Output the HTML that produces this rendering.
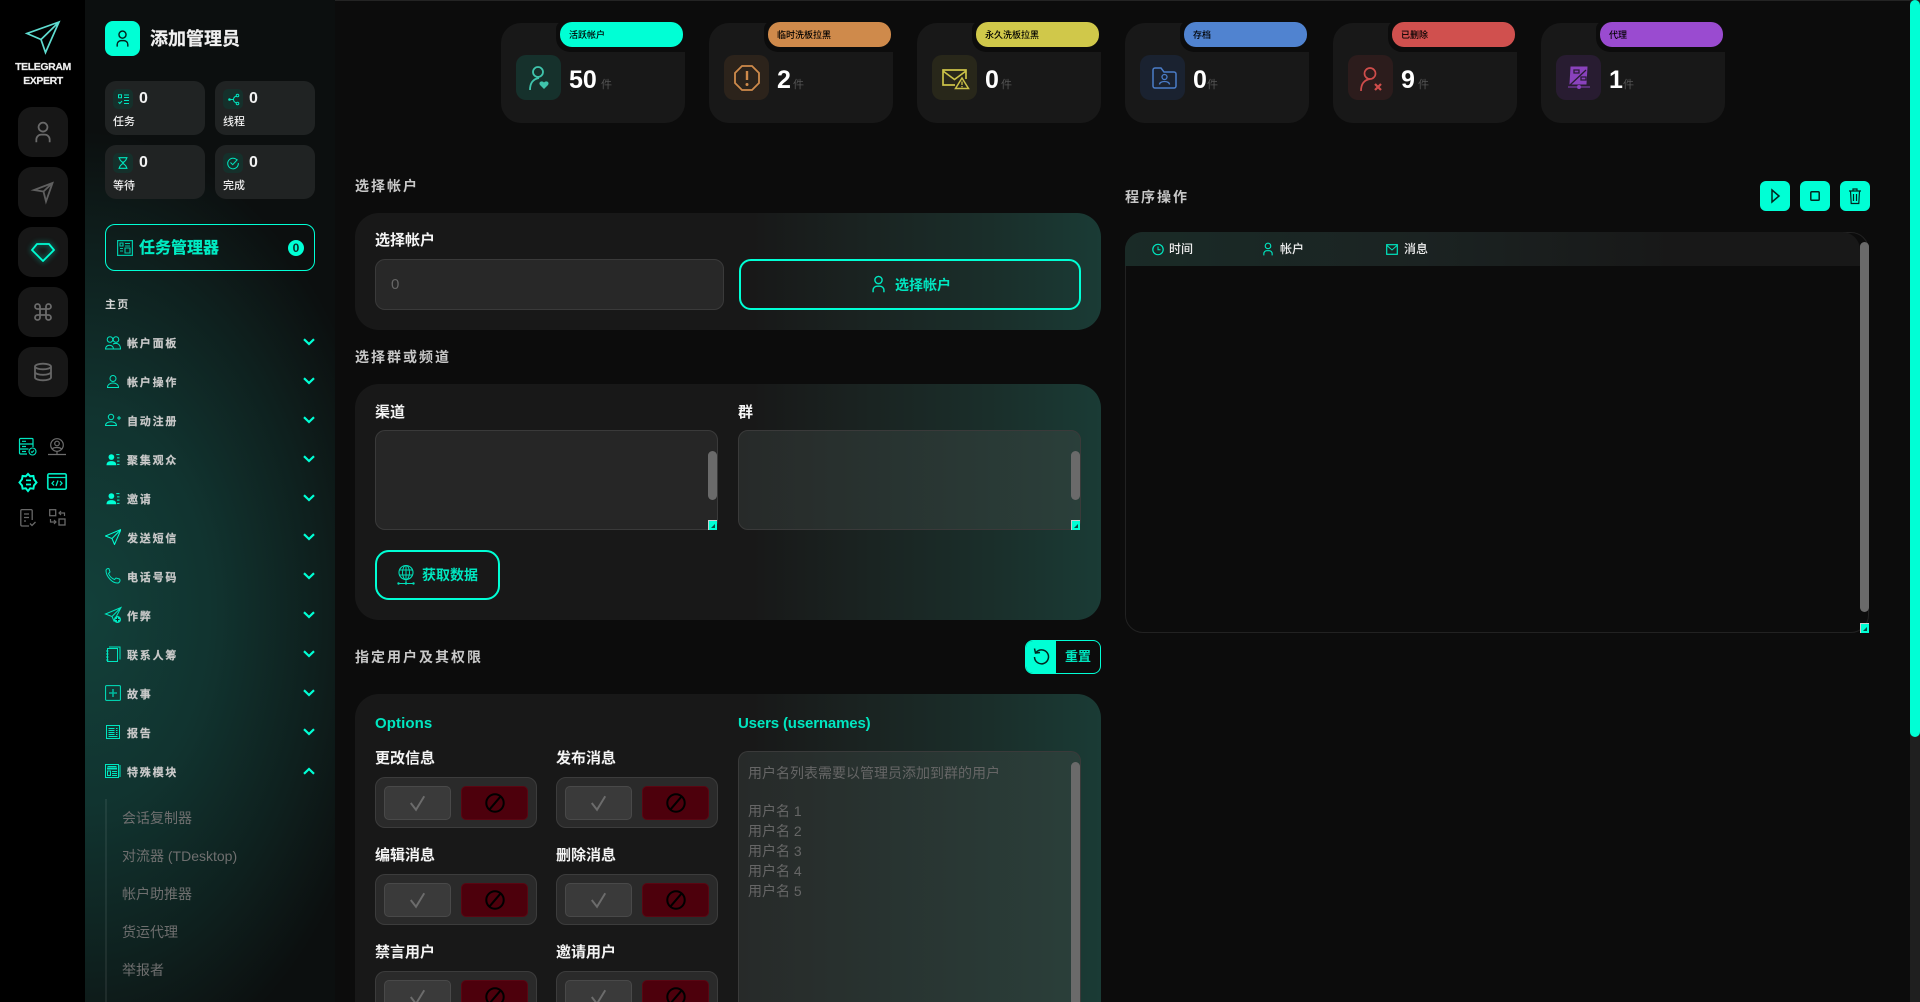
<!DOCTYPE html>
<html lang="zh"><head><meta charset="utf-8"><title>Telegram Expert</title>
<style>
*{box-sizing:border-box}
html,body{margin:0;padding:0;width:1920px;height:1002px;overflow:hidden;background:#0c0c0c}
body{position:relative;font-family:"Liberation Sans","Noto Sans CJK SC",sans-serif;color:#fff}
.a{position:absolute}
.t{position:absolute;white-space:nowrap;line-height:1.2}
svg{position:absolute;overflow:visible;fill:none}
.rail{position:absolute;left:0;top:0;width:85px;height:1002px;background:#000}
.side{position:absolute;left:85px;top:0;width:250px;height:1002px;background:radial-gradient(ellipse 310px 480px at 0% 61%,#12403a 0%,#11332f 42%,#0e1f1d 76%,#0c0f0f 100%)}
.rb{position:absolute;left:18px;width:50px;height:50px;border-radius:14px;background:#171717}
.sb{position:absolute;width:100px;height:54px;border-radius:11px;background:#202323}
.sb i{position:absolute;left:8px;top:8px;width:20px;height:20px;border-radius:5px;background:#15302b}
.sb b{position:absolute;left:34px;top:9px;font-size:16px;line-height:18px;color:#f2f2f2}
.sb span{position:absolute;left:8px;top:34px;font-size:11px;line-height:14px;color:#eee;font-weight:500}
.m{position:absolute;left:127px;font-size:11px;font-weight:700;letter-spacing:1.8px;line-height:14px;color:#c9c9c9;white-space:nowrap;-webkit-text-stroke:.2px #c9c9c9}
.sub{position:absolute;left:122px;font-size:14px;line-height:18px;color:#6f6f6f;white-space:nowrap}
.card{position:absolute;top:23px;width:184px;height:100px;border-radius:20px;background:#181818}
.notch{position:absolute;left:55px;top:-2px;width:131px;height:31px;background:#0c0c0c;border-bottom-left-radius:14px;border-top-left-radius:8px}
.pill{position:absolute;left:59px;top:-1px;width:123px;height:25px;border-radius:12px;color:#000;font-size:9px;line-height:27px;padding-left:9px;font-weight:500}
.ib{position:absolute;left:15px;top:32px;width:45px;height:45px;border-radius:10px}
.num{position:absolute;left:68px;top:42px;font-size:25px;line-height:30px;font-weight:700;color:#fff}
.jian{position:absolute;top:56px;font-size:11px;line-height:13px;color:#555}
.h{position:absolute;left:355px;font-size:14px;font-weight:700;letter-spacing:2px;line-height:16px;color:#c8c8c8;white-space:nowrap}
.panel{position:absolute;left:355px;width:746px;border-radius:24px;background:linear-gradient(90deg,#181818 0,#181818 53%,#1a2321 68%,#1a2e2a 85%,#1a3b35 100%)}
.lb{position:absolute;font-size:15px;line-height:18px;font-weight:700;color:#f4f4f4;white-space:nowrap}
.ta{position:absolute;border:1px solid #3a3a3a;border-radius:10px}
.thumb{position:absolute;width:9px;border-radius:5px;background:#6a6a6a}
.rz{position:absolute;width:9px;height:10px;background:#00ffd5;border-top:1px solid #ccc;border-left:1px solid #ccc}
.rz:after{content:"";position:absolute;left:2px;top:3px;width:0;height:0;border-left:4px solid transparent;border-bottom:4px solid #0a4a40}
.tg{position:absolute;width:162px;height:51px;border-radius:10px;background:#2a2a2a;border:1px solid #3c3c3c}
.tg u{position:absolute;left:8px;top:8px;width:67px;height:34px;border-radius:5px;background:#3a3a3a;border:1px solid #494949}
.tg s{position:absolute;left:85px;top:8px;width:67px;height:34px;border-radius:5px;background:#4d000c;border:1px solid #5a0612}
.ph{position:absolute;left:748px;font-size:14px;line-height:20px;color:#666;white-space:nowrap}
.ab{position:absolute;top:181px;width:30px;height:30px;border-radius:6px;background:#00ffd5}
</style></head><body>
<svg width="0" height="0" style="position:absolute"><defs>
<symbol id="usr" viewBox="0 0 18 24"><circle cx="9" cy="6.500" r="5" stroke="currentColor" stroke-width="2"/><path d="M1.500 23.500v-3a5.500 5.500 0 0 1 5.500-5.500h4a5.500 5.500 0 0 1 5.500 5.500v3" stroke="currentColor" stroke-width="2"/></symbol>
<symbol id="chk" viewBox="0 0 24 24"><path d="M3 12l7 9L21 3" stroke="#6c6c6c" stroke-width="2.600"/></symbol>
<symbol id="ban" viewBox="0 0 24 24"><circle cx="12" cy="12" r="9.500" stroke="#000" stroke-width="2.200"/><path d="M6 19L18 5" stroke="#000" stroke-width="2.200"/></symbol>
<symbol id="dn" viewBox="0 0 12 8"><path d="M1 1.200l5 4.800 5-4.800" stroke="#00ffd5" stroke-width="2.200"/></symbol>
<symbol id="lst" viewBox="0 0 16 16"><circle cx="6" cy="5" r="3.500" fill="#00ffd5"/><path d="M0 15c0-3.500 2-5 6-5s6 1.500 6 5z" fill="#00ffd5"/><path d="M12 2h4M13 6h3M13 10h3M13 14h3" stroke="#00ffd5" stroke-width="1.300"/></symbol>
<symbol id="pln" viewBox="0 0 16 16"><path d="M16 .5L.5 7l6.500 2.500L9.500 15.500zM16 .5L7 9.500" stroke="#00ffd5" stroke-width="1"/></symbol>
</defs></svg>

<div class="a" style="left:0;top:0;width:1920px;height:1px;background:#242424"></div>
<div class="rail"></div>
<div class="side"></div>

<!-- logo -->
<svg style="left:26px;top:21px" width="34" height="33" viewBox="0 0 34 33"><path d="M33 1L1 12.500l14 6L19.500 31.500zM33 1L15 18.500" stroke="#5fdcd0" stroke-width="1.700"/></svg>
<div class="t" style="left:10px;width:66px;text-align:center;top:60px;font-size:10.500px;font-weight:700;line-height:14px;color:#eee;letter-spacing:-.4px;-webkit-text-stroke:.2px #eee">TELEGRAM<br>EXPERT</div>

<div class="rb" style="top:107px"></div><div class="rb" style="top:167px"></div><div class="rb" style="top:227px"></div><div class="rb" style="top:287px"></div><div class="rb" style="top:347px"></div>
<svg style="left:35px;top:121px;color:#6a6a6a" width="16" height="22"><use href="#usr" width="16" height="22"/></svg>
<svg style="left:33px;top:182px" width="20" height="20" viewBox="0 0 20 20"><path d="M19.500 1L1 8l9.500 1.500L13 19.500zM19.500 1L10.500 9.500" stroke="#5f5f5f" stroke-width="1.800"/></svg>
<svg style="left:31px;top:243px;filter:drop-shadow(0 0 3px #00b89c)" width="24" height="19" viewBox="0 0 24 19"><path d="M6 1h12l5 6-11 11L1 7z" stroke="#00ffd5" stroke-width="1.800" stroke-linejoin="round"/></svg>
<svg style="left:34px;top:303px" width="18" height="18" viewBox="0 0 18 18"><path d="M6 6V3.500A2.500 2.500 0 1 0 3.500 6H14.500A2.500 2.500 0 1 0 12 3.500v11A2.500 2.500 0 1 0 14.500 12H3.500A2.500 2.500 0 1 0 6 14.500z" stroke="#6a6a6a" stroke-width="1.800"/></svg>
<svg style="left:34px;top:363px" width="18" height="18" viewBox="0 0 18 18"><ellipse cx="9" cy="3.500" rx="8" ry="2.800" stroke="#666" stroke-width="1.800"/><path d="M1 3.500v11c0 1.600 3.600 2.800 8 2.800s8-1.200 8-2.800v-11M1 9c0 1.600 3.600 2.800 8 2.800s8-1.200 8-2.800" stroke="#666" stroke-width="1.800"/></svg>

<!-- small rail icons -->
<svg style="left:19px;top:438px" width="18" height="18" viewBox="0 0 18 18"><path d="M8 16H1.500a1 1 0 0 1-1-1V1.500a1 1 0 0 1 1-1h11.500a1 1 0 0 1 1 1V9M.5 6h13.500M.5 11h9M3 3.300h4M3 8.500h4M3 13.500h4" stroke="#00e6c0" stroke-width="1.200"/><circle cx="13.500" cy="13.500" r="3.500" stroke="#00e6c0" stroke-width="1.100"/><path d="M12 13.500l1 1 2-2" stroke="#00e6c0"/></svg>
<svg style="left:48px;top:438px" width="18" height="18" viewBox="0 0 18 18"><circle cx="9" cy="7" r="6.300" stroke="#6e6e6e" stroke-width="1.200"/><circle cx="9" cy="5.500" r="2.300" stroke="#6e6e6e" stroke-width="1.200"/><path d="M4.500 11c.8-2 7.500-2 9 0M9 13.500V16M0 16.500h18" stroke="#6e6e6e" stroke-width="1.200"/></svg>
<svg style="left:19px;top:473px" width="18" height="19" viewBox="0 0 18 19"><path d="M9 1l2.200 2.300 3.200-.3.600 3.200L17.500 9.500 15 12.500l-.6 3.200-3.200-.4L9 18l-2.200-2.700-3.200.4L3 12.500.5 9.500 3 6.200l.6-3.200 3.200.3z" stroke="#00ffd5" stroke-width="2"/><path d="M7 7.300h5M7 11.500h5" stroke="#00ffd5" stroke-width="1.700"/></svg>
<svg style="left:47px;top:473px" width="20" height="17" viewBox="0 0 20 17"><rect x=".8" y=".8" width="18.400" height="15.400" rx="1.500" stroke="#00e6c0" stroke-width="1.700"/><path d="M1 4.500h18M7 8l-2 2.200L7 12.500M13 8l2 2.200-2 2.300M11 7.500l-2 5.500" stroke="#00e6c0" stroke-width="1.300"/></svg>
<svg style="left:20px;top:509px" width="16" height="18" viewBox="0 0 16 18"><path d="M9 17H2a1.200 1.200 0 0 1-1.200-1.200V1.700A1.200 1.200 0 0 1 2 .6h9a1.200 1.200 0 0 1 1.200 1.200V11M4 5h5M4 8.500h5M4 12h2M10 14.500l2 2 3.500-3.500" stroke="#686868" stroke-width="1.300"/></svg>
<svg style="left:49px;top:509px" width="17" height="17" viewBox="0 0 17 17"><rect x=".7" y=".7" width="6" height="6" stroke="#686868" stroke-width="1.300"/><rect x="10" y="10" width="6" height="6" stroke="#686868" stroke-width="1.300"/><path d="M10 4h5.500v3M12 2L10 4l2 2M7 13H1.500v-3M5 11l2 2-2 2" stroke="#686868" stroke-width="1.200"/></svg>

<!-- heading -->
<div class="a" style="left:105px;top:21px;width:35px;height:35px;border-radius:8px;background:#00ffd5"></div>
<svg style="left:115px;top:30px;color:#03201a" width="15" height="17"><use href="#usr" width="15" height="17"/></svg>
<div class="t" style="left:150px;top:28px;font-size:18px;font-weight:700;color:#f0f0f0;line-height:22px;-webkit-text-stroke:.2px #f0f0f0">添加管理员</div>

<!-- stat boxes -->
<div class="sb" style="left:105px;top:81px"><i></i><b>0</b><span>任务</span></div>
<div class="sb" style="left:215px;top:81px"><i></i><b>0</b><span>线程</span></div>
<div class="sb" style="left:105px;top:145px"><i></i><b>0</b><span>等待</span></div>
<div class="sb" style="left:215px;top:145px"><i></i><b>0</b><span>完成</span></div>
<svg style="left:118px;top:94px" width="11" height="11" viewBox="0 0 11 11"><path d="M.5.700h3v3h-3zM6 1h5M6 3.500h5M6 6.500h5M6 9.500h5M.5 8l1.300 1.500L4 7" stroke="#00e6c0" stroke-width="1"/></svg>
<svg style="left:228px;top:94px" width="11" height="11" viewBox="0 0 11 11"><circle cx="1.500" cy="5.500" r="1.300" fill="#00e6c0"/><circle cx="9.500" cy="1.500" r="1.300" stroke="#00e6c0"/><circle cx="9.500" cy="9.500" r="1.300" stroke="#00e6c0"/><path d="M2 5.500h3.500M8.500 2Q5.500 3 5.500 5.500T8.500 9" stroke="#00e6c0"/></svg>
<svg style="left:118px;top:157px" width="10" height="12" viewBox="0 0 10 12"><path d="M.5.700h9M.5 11.300h9M1.500 1c0 3 3 3.500 3.500 5 .5-1.500 3.500-2 3.500-5M1.500 11c0-3 3-3.500 3.500-5 .5 1.500 3.500 2 3.500 5" stroke="#00e6c0" stroke-width="1.100"/></svg>
<svg style="left:227px;top:157px" width="12" height="12" viewBox="0 0 12 12"><path d="M10 3A5.300 5.300 0 1 0 11.300 6" stroke="#00e6c0"/><path d="M3.500 5.500l2.200 2.200L10.500 2.500" stroke="#00e6c0"/></svg>

<!-- task manager -->
<div class="a" style="left:105px;top:224px;width:210px;height:47px;border:1.500px solid #00ffd5;border-radius:10px"></div>
<svg style="left:117px;top:240px" width="16" height="16" viewBox="0 0 16 16"><rect x=".6" y=".6" width="14.800" height="14.800" stroke="#00c8a8" stroke-width="1.200"/><path d="M3 3h3v3H3zM8 3.500h5M8 6h5M3 8.500h3M3 11h3M8 8h5v5H8z" stroke="#00c8a8" stroke-width="1.100"/></svg>
<div class="t" style="left:139px;top:239px;font-size:16px;font-weight:700;color:#00ecc4;line-height:20px;-webkit-text-stroke:.2px #00ecc4">任务管理器</div>
<div class="a" style="left:288px;top:240px;width:16px;height:16px;border-radius:50%;background:#00ffd5;color:#0b2a25;font-size:12px;font-weight:700;line-height:16px;text-align:center">0</div>

<div class="t" style="left:105px;top:298px;font-size:11px;font-weight:700;letter-spacing:1.300px;color:#d6d6d6;line-height:14px">主页</div>

<!-- menu -->
<div class="m" style="top:337px">帐户面板</div><div class="m" style="top:376px">帐户操作</div><div class="m" style="top:415px">自动注册</div><div class="m" style="top:454px">聚集观众</div><div class="m" style="top:493px">邀请</div><div class="m" style="top:532px">发送短信</div><div class="m" style="top:571px">电话号码</div><div class="m" style="top:610px">作弊</div><div class="m" style="top:649px">联系人筹</div><div class="m" style="top:688px">故事</div><div class="m" style="top:727px">报告</div><div class="m" style="top:766px">特殊模块</div>
<svg style="left:303px;top:338px" width="12" height="8"><use href="#dn"/></svg><svg style="left:303px;top:377px" width="12" height="8"><use href="#dn"/></svg><svg style="left:303px;top:416px" width="12" height="8"><use href="#dn"/></svg><svg style="left:303px;top:455px" width="12" height="8"><use href="#dn"/></svg><svg style="left:303px;top:494px" width="12" height="8"><use href="#dn"/></svg><svg style="left:303px;top:533px" width="12" height="8"><use href="#dn"/></svg><svg style="left:303px;top:572px" width="12" height="8"><use href="#dn"/></svg><svg style="left:303px;top:611px" width="12" height="8"><use href="#dn"/></svg><svg style="left:303px;top:650px" width="12" height="8"><use href="#dn"/></svg><svg style="left:303px;top:689px" width="12" height="8"><use href="#dn"/></svg><svg style="left:303px;top:728px" width="12" height="8"><use href="#dn"/></svg>
<svg style="left:303px;top:767px" width="12" height="8" viewBox="0 0 12 8"><path d="M1 6.800l5-4.800 5 4.800" stroke="#00ffd5" stroke-width="2.200"/></svg>

<svg style="left:105px;top:336px" width="16" height="14" viewBox="0 0 16 14"><circle cx="5" cy="3.500" r="2.800" stroke="#00e6c0"/><circle cx="11" cy="3.500" r="2.800" stroke="#00e6c0"/><path d="M.5 13c0-5 8-5 8 0zM8 8c4-1.500 7.500 0 7.500 5H9" stroke="#00e6c0"/></svg>
<svg style="left:107px;top:375px" width="12" height="13" viewBox="0 0 12 13"><circle cx="6" cy="3.500" r="3" stroke="#00e6c0"/><path d="M.5 12.500c0-6 11-6 11 0z" stroke="#00e6c0"/></svg>
<svg style="left:105px;top:414px" width="16" height="12" viewBox="0 0 16 12"><circle cx="6" cy="3" r="2.700" stroke="#00e6c0"/><path d="M.5 11.500c0-5 11-5 11 0zM12 4h4M14 2v4" stroke="#00e6c0"/></svg>
<svg style="left:105px;top:453px" width="16" height="13"><use href="#lst" width="16" height="13"/></svg>
<svg style="left:105px;top:492px" width="16" height="13"><use href="#lst" width="16" height="13"/></svg>
<svg style="left:105px;top:529px" width="16" height="16"><use href="#pln"/></svg>
<svg style="left:105px;top:568px" width="16" height="16" viewBox="0 0 16 16"><path d="M1 2.500C1 1 3 0 4 .8l1 3.200-1.500 1.500c1 2.500 3.500 5 6 6L11 10l3.500 1c1 1 .5 3.500-1.500 4C7 15.500 1 8 1 2.500z" stroke="#00e6c0"/></svg>
<svg style="left:105px;top:607px" width="16" height="16" viewBox="0 0 16 16"><path d="M16 .5L.5 7l6.500 2.500 2 4.500zM16 .5L7 9.500" stroke="#00e6c0"/><circle cx="12.500" cy="12.500" r="3.500" fill="#00e6c0"/><path d="M12.500 10.500v4M10.500 12.500h4" stroke="#0d2a26"/></svg>
<svg style="left:105px;top:646px" width="16" height="16" viewBox="0 0 16 16"><path d="M2.500 2.500h10v13h-10zM4 1h11v12.500M1 5h2.500M1 8h2.500M1 11h2.500M1 14h2.500" stroke="#00e6c0"/></svg>
<svg style="left:105px;top:685px" width="16" height="16" viewBox="0 0 16 16"><rect x=".6" y=".6" width="14.800" height="14.800" rx="1" stroke="#00e6c0" stroke-width="1"/><path d="M8 4v8M4 8h8" stroke="#00b89c" stroke-width="1.600"/></svg>
<svg style="left:106px;top:725px" width="14" height="14" viewBox="0 0 14 14"><rect x=".5" y=".5" width="13" height="13" stroke="#00e6c0"/><path d="M2.500 3.500h6M2.500 5.500h6M2.500 7.500h6M2.500 9.500h6M2.500 11.500h9M10 3.500h1.500M10 5.500h1.500M10 7.500h1.500M10 9.500h1.500" stroke="#00e6c0"/></svg>
<svg style="left:105px;top:764px" width="16" height="14" viewBox="0 0 16 14"><path d="M.5.500h13v13H.5zM2.500 2.500h9M15 1v12" stroke="#00e6c0"/><path d="M2 4.500h10" stroke="#00e6c0" stroke-width="2"/><path d="M2.500 7h3v4.500h-3zM7 7.500h5M7 9.500h5M7 11.500h5" stroke="#00e6c0"/></svg>

<div class="a" style="left:105px;top:799px;width:2px;height:203px;background:rgba(255,255,255,.07)"></div>
<div class="sub" style="top:809px">会话复制器</div><div class="sub" style="top:847px">对流器 (TDesktop)</div><div class="sub" style="top:885px">帐户助推器</div><div class="sub" style="top:923px">货运代理</div><div class="sub" style="top:961px">举报者</div>

<!-- stat cards -->
<div class="card" style="left:501px"><div class="notch"></div><div class="pill" style="background:#00ffd5">活跃帐户</div><div class="ib" style="background:#16312c"></div><div class="num">50</div><div class="jian" style="left:100px">件</div>
<svg style="left:28px;top:43px" width="21" height="24" viewBox="0 0 21 24"><circle cx="9" cy="6" r="5" stroke="#3fc4ac" stroke-width="1.800"/><path d="M1 24c0-7 3-11 9-12" stroke="#3fc4ac" stroke-width="1.800"/><path d="M15 23l-4-4c-2-3 2-5 4-2.500 2-2.500 6-.5 4 2.500z" fill="#3fc4ac"/></svg></div>
<div class="card" style="left:709px"><div class="notch"></div><div class="pill" style="background:#cf8a4b">临时洗板拉黑</div><div class="ib" style="background:#2c231b"></div><div class="num">2</div><div class="jian" style="left:84px">件</div>
<svg style="left:25px;top:42px" width="26" height="26" viewBox="0 0 26 26"><path d="M8 1h10l7 7v10l-7 7H8l-7-7V8z" stroke="#cf8a4b" stroke-width="1.800"/><path d="M13 6v9" stroke="#cf8a4b" stroke-width="2.400"/><circle cx="13" cy="19.500" r="1.500" fill="#cf8a4b"/></svg></div>
<div class="card" style="left:917px"><div class="notch"></div><div class="pill" style="background:#d0c84a">永久洗板拉黑</div><div class="ib" style="background:#28271a"></div><div class="num">0</div><div class="jian" style="left:84px">件</div>
<svg style="left:25px;top:46px" width="27" height="20" viewBox="0 0 27 20"><path d="M13 16H1V1h23v9M1 2l11.500 8.500L24 2" stroke="#cbc248" stroke-width="1.700"/><path d="M20 9l6.500 10.500H13.500z" stroke="#cbc248" stroke-width="1.500" fill="#28271a"/><path d="M20 12.500v3.500M20 17v1.200" stroke="#cbc248" stroke-width="1.300"/></svg></div>
<div class="card" style="left:1125px"><div class="notch"></div><div class="pill" style="background:#5083d0">存档</div><div class="ib" style="background:#1a2230"></div><div class="num">0</div><div class="jian" style="left:82px">件</div>
<svg style="left:27px;top:44px" width="25" height="22" viewBox="0 0 25 22"><path d="M1 3a2 2 0 0 1 2-2h6l3 4h10a2 2 0 0 1 2 2v12a2 2 0 0 1-2 2H3a2 2 0 0 1-2-2z" stroke="#4a7cc7" stroke-width="1.500"/><circle cx="12.500" cy="10" r="2.500" stroke="#4a7cc7" stroke-width="1.300"/><path d="M7.500 17.500c0-4 10-4 10 0" stroke="#4a7cc7" stroke-width="1.300"/></svg></div>
<div class="card" style="left:1333px"><div class="notch"></div><div class="pill" style="background:#d0504e">已删除</div><div class="ib" style="background:#2c1c1c"></div><div class="num">9</div><div class="jian" style="left:85px">件</div>
<svg style="left:27px;top:44px" width="24" height="24" viewBox="0 0 24 24"><circle cx="10" cy="6.500" r="5.500" stroke="#cf4d4b" stroke-width="1.700"/><path d="M1 24c0-7 3-11 9-12" stroke="#cf4d4b" stroke-width="1.700"/><path d="M15 17l6 6M21 17l-6 6" stroke="#cf4d4b" stroke-width="2.200"/></svg></div>
<div class="card" style="left:1541px"><div class="notch"></div><div class="pill" style="background:#9a4bd0">代理</div><div class="ib" style="background:#281c31"></div><div class="num">1</div><div class="jian" style="left:82px">件</div>
<svg style="left:26px;top:43px" width="24" height="24" viewBox="0 0 24 24"><path d="M4 1h16l-1 17H3z" fill="#8a42bd" stroke="#8a42bd"/><path d="M7 4h5v3H7zM14 11h5v3h-5z" stroke="#2a1c35" stroke-width="1.300"/><path d="M3 19L19 4" stroke="#281c31" stroke-width="1.300"/><circle cx="12" cy="21" r="2" fill="#8a42bd"/><path d="M1 21h22" stroke="#8a42bd"/></svg></div>

<!-- sections -->
<div class="h" style="top:178px">选择帐户</div>
<div class="panel" style="top:213px;height:117px"></div>
<div class="lb" style="left:375px;top:232px">选择帐户</div>
<div class="ta" style="left:375px;top:259px;width:349px;height:51px;background:#282828"></div>
<div class="t" style="left:391px;top:276px;font-size:15px;color:#666">0</div>
<div class="a" style="left:739px;top:259px;width:342px;height:51px;border:2px solid #00ffd5;border-radius:12px"></div>
<svg style="left:872px;top:275px;color:#00e6c0" width="13" height="18"><use href="#usr" width="13" height="18"/></svg>
<div class="t" style="left:895px;top:277px;font-size:14px;font-weight:700;color:#00e6c0;line-height:17px">选择帐户</div>

<div class="h" style="top:349px">选择群或频道</div>
<div class="panel" style="top:384px;height:236px"></div>
<div class="lb" style="left:375px;top:404px">渠道</div>
<div class="lb" style="left:738px;top:404px">群</div>
<div class="ta" style="left:375px;top:430px;width:343px;height:100px;background:#262626"></div>
<div class="ta" style="left:738px;top:430px;width:343px;height:100px;background:linear-gradient(90deg,#272a29,#2a3f3a)"></div>
<div class="thumb" style="left:708px;top:451px;height:49px"></div><div class="thumb" style="left:1071px;top:451px;height:49px"></div>
<div class="rz" style="left:708px;top:520px"></div><div class="rz" style="left:1071px;top:520px"></div>
<div class="a" style="left:375px;top:550px;width:125px;height:50px;border:2px solid #00ffd5;border-radius:14px"></div>
<svg style="left:397px;top:565px" width="18" height="20" viewBox="0 0 18 20"><circle cx="9" cy="7.500" r="7" stroke="#00ddb8" stroke-width="1.100"/><ellipse cx="9" cy="7.500" rx="3.500" ry="7" stroke="#00ddb8" stroke-width="1"/><path d="M2 5h14M2 10h14M9 .5v14.500M9 15v3.500M1 18.500h16" stroke="#00ddb8" stroke-width="1"/><circle cx="1.500" cy="18.500" r="1.200" fill="#00ddb8"/><circle cx="9" cy="18.500" r="1.200" fill="#00ddb8"/><circle cx="16.500" cy="18.500" r="1.200" fill="#00ddb8"/></svg>
<div class="t" style="left:422px;top:567px;font-size:14px;font-weight:700;color:#00e6c0;line-height:17px">获取数据</div>

<div class="h" style="top:649px">指定用户及其权限</div>
<div class="a" style="left:1025px;top:640px;width:76px;height:34px;border:1px solid #00ffd5;border-radius:8px;overflow:hidden"><div class="a" style="left:0;top:0;width:30px;height:34px;background:#00ffd5"></div></div>
<svg style="left:1033px;top:647px" width="16" height="19" viewBox="0 0 16 19"><path d="M3 5.500A7 7 0 1 1 1.500 10M1.500 1.500l1 4.500 4.500-.5" stroke="#02261f" stroke-width="1.500"/></svg>
<div class="t" style="left:1065px;top:649px;font-size:13px;font-weight:700;color:#00e6c0;line-height:16px">重置</div>

<div class="panel" style="top:694px;height:308px;border-radius:24px 24px 0 0"></div>
<div class="lb" style="left:375px;top:715px;color:#00e6c0;letter-spacing:.1px">Options</div>
<div class="lb" style="left:738px;top:715px;color:#00e6c0;letter-spacing:-.15px">Users (usernames)</div>
<div class="lb" style="left:375px;top:750px">更改信息</div><div class="lb" style="left:556px;top:750px">发布消息</div>
<div class="lb" style="left:375px;top:847px">编辑消息</div><div class="lb" style="left:556px;top:847px">删除消息</div>
<div class="lb" style="left:375px;top:944px">禁言用户</div><div class="lb" style="left:556px;top:944px">邀请用户</div>

<div class="tg" style="left:375px;top:777px"><u><svg style="left:22px;top:7px" width="21" height="18"><use href="#chk" width="21" height="18"/></svg></u><s><svg style="left:22px;top:5px" width="22" height="22"><use href="#ban" width="22" height="22"/></svg></s></div>
<div class="tg" style="left:556px;top:777px"><u><svg style="left:22px;top:7px" width="21" height="18"><use href="#chk" width="21" height="18"/></svg></u><s><svg style="left:22px;top:5px" width="22" height="22"><use href="#ban" width="22" height="22"/></svg></s></div>
<div class="tg" style="left:375px;top:874px"><u><svg style="left:22px;top:7px" width="21" height="18"><use href="#chk" width="21" height="18"/></svg></u><s><svg style="left:22px;top:5px" width="22" height="22"><use href="#ban" width="22" height="22"/></svg></s></div>
<div class="tg" style="left:556px;top:874px"><u><svg style="left:22px;top:7px" width="21" height="18"><use href="#chk" width="21" height="18"/></svg></u><s><svg style="left:22px;top:5px" width="22" height="22"><use href="#ban" width="22" height="22"/></svg></s></div>
<div class="a" style="left:375px;top:971px;width:343px;height:31px;overflow:hidden">
<div class="tg" style="left:0;top:0"><u><svg style="left:22px;top:7px" width="21" height="18"><use href="#chk" width="21" height="18"/></svg></u><s><svg style="left:22px;top:5px" width="22" height="22"><use href="#ban" width="22" height="22"/></svg></s></div>
<div class="tg" style="left:181px;top:0"><u><svg style="left:22px;top:7px" width="21" height="18"><use href="#chk" width="21" height="18"/></svg></u><s><svg style="left:22px;top:5px" width="22" height="22"><use href="#ban" width="22" height="22"/></svg></s></div>
</div>

<div class="ta" style="left:738px;top:751px;width:343px;height:251px;border-bottom:0;border-radius:10px 10px 0 0;background:linear-gradient(90deg,#272a29,#2a3f3a)"></div>
<div class="ph" style="top:763px">用户名列表需要以管理员添加到群的用户</div>
<div class="ph" style="top:801px">用户名 1</div><div class="ph" style="top:821px">用户名 2</div><div class="ph" style="top:841px">用户名 3</div><div class="ph" style="top:861px">用户名 4</div><div class="ph" style="top:881px">用户名 5</div>
<div class="thumb" style="left:1071px;top:762px;height:240px;border-radius:5px 5px 0 0"></div>

<!-- log -->
<div class="h" style="left:1125px;top:189px">程序操作</div>
<div class="ab" style="left:1760px"></div><div class="ab" style="left:1800px"></div><div class="ab" style="left:1840px"></div>
<svg style="left:1771px;top:189px" width="9" height="14" viewBox="0 0 9 14"><path d="M1 1l7 6-7 6z" stroke="#02261f" stroke-width="1.500"/></svg>
<svg style="left:1810px;top:191px" width="10" height="10" viewBox="0 0 10 10"><rect x=".8" y=".8" width="8.400" height="8.400" rx="1" stroke="#02261f" stroke-width="1.500"/></svg>
<svg style="left:1849px;top:188px" width="12" height="16" viewBox="0 0 12 16"><path d="M0 3h12M4 3V1h4v2M1.500 3l.7 12.500h7.600L10.500 3M4.500 6v7M7.500 6v7" stroke="#02261f" stroke-width="1.200"/></svg>

<div class="a" style="left:1125px;top:232px;width:744px;height:401px;border:1px solid #222;border-radius:18px"></div>
<div class="a" style="left:1125px;top:232px;width:735px;height:34px;border-radius:18px 18px 0 0;background:linear-gradient(90deg,#1a2b27,#1b2322 40%,#181818 75%)"></div>
<svg style="left:1152px;top:243px" width="12" height="13" viewBox="0 0 12 13"><circle cx="6" cy="6.500" r="5.200" stroke="#00e6c0" stroke-width="1.200"/><path d="M6 3.500v3.300h2.500" stroke="#00e6c0"/></svg>
<div class="t" style="left:1169px;top:242px;font-size:12px;line-height:15px;color:#eee;font-weight:500">时间</div>
<svg style="left:1263px;top:242px;color:#00e6c0" width="10" height="14"><use href="#usr" width="10" height="14"/></svg>
<div class="t" style="left:1280px;top:242px;font-size:12px;line-height:15px;color:#eee;font-weight:500">帐户</div>
<svg style="left:1386px;top:244px" width="12" height="11" viewBox="0 0 12 11"><rect x=".7" y=".7" width="10.600" height="9.600" stroke="#00e6c0" stroke-width="1.200"/><path d="M1 1.500l5 4.500 5-4.500" stroke="#00e6c0"/></svg>
<div class="t" style="left:1404px;top:242px;font-size:12px;line-height:15px;color:#eee;font-weight:500">消息</div>
<div class="thumb" style="left:1860px;top:242px;height:370px"></div>
<div class="rz" style="left:1860px;top:623px"></div>

<!-- page scrollbar -->
<div class="a" style="left:1910px;top:0;width:10px;height:1002px;background:#1f1f1f"></div>
<div class="a" style="left:1910px;top:0;width:10px;height:737px;border-radius:5px;background:#00ffd5"></div>
</body></html>
